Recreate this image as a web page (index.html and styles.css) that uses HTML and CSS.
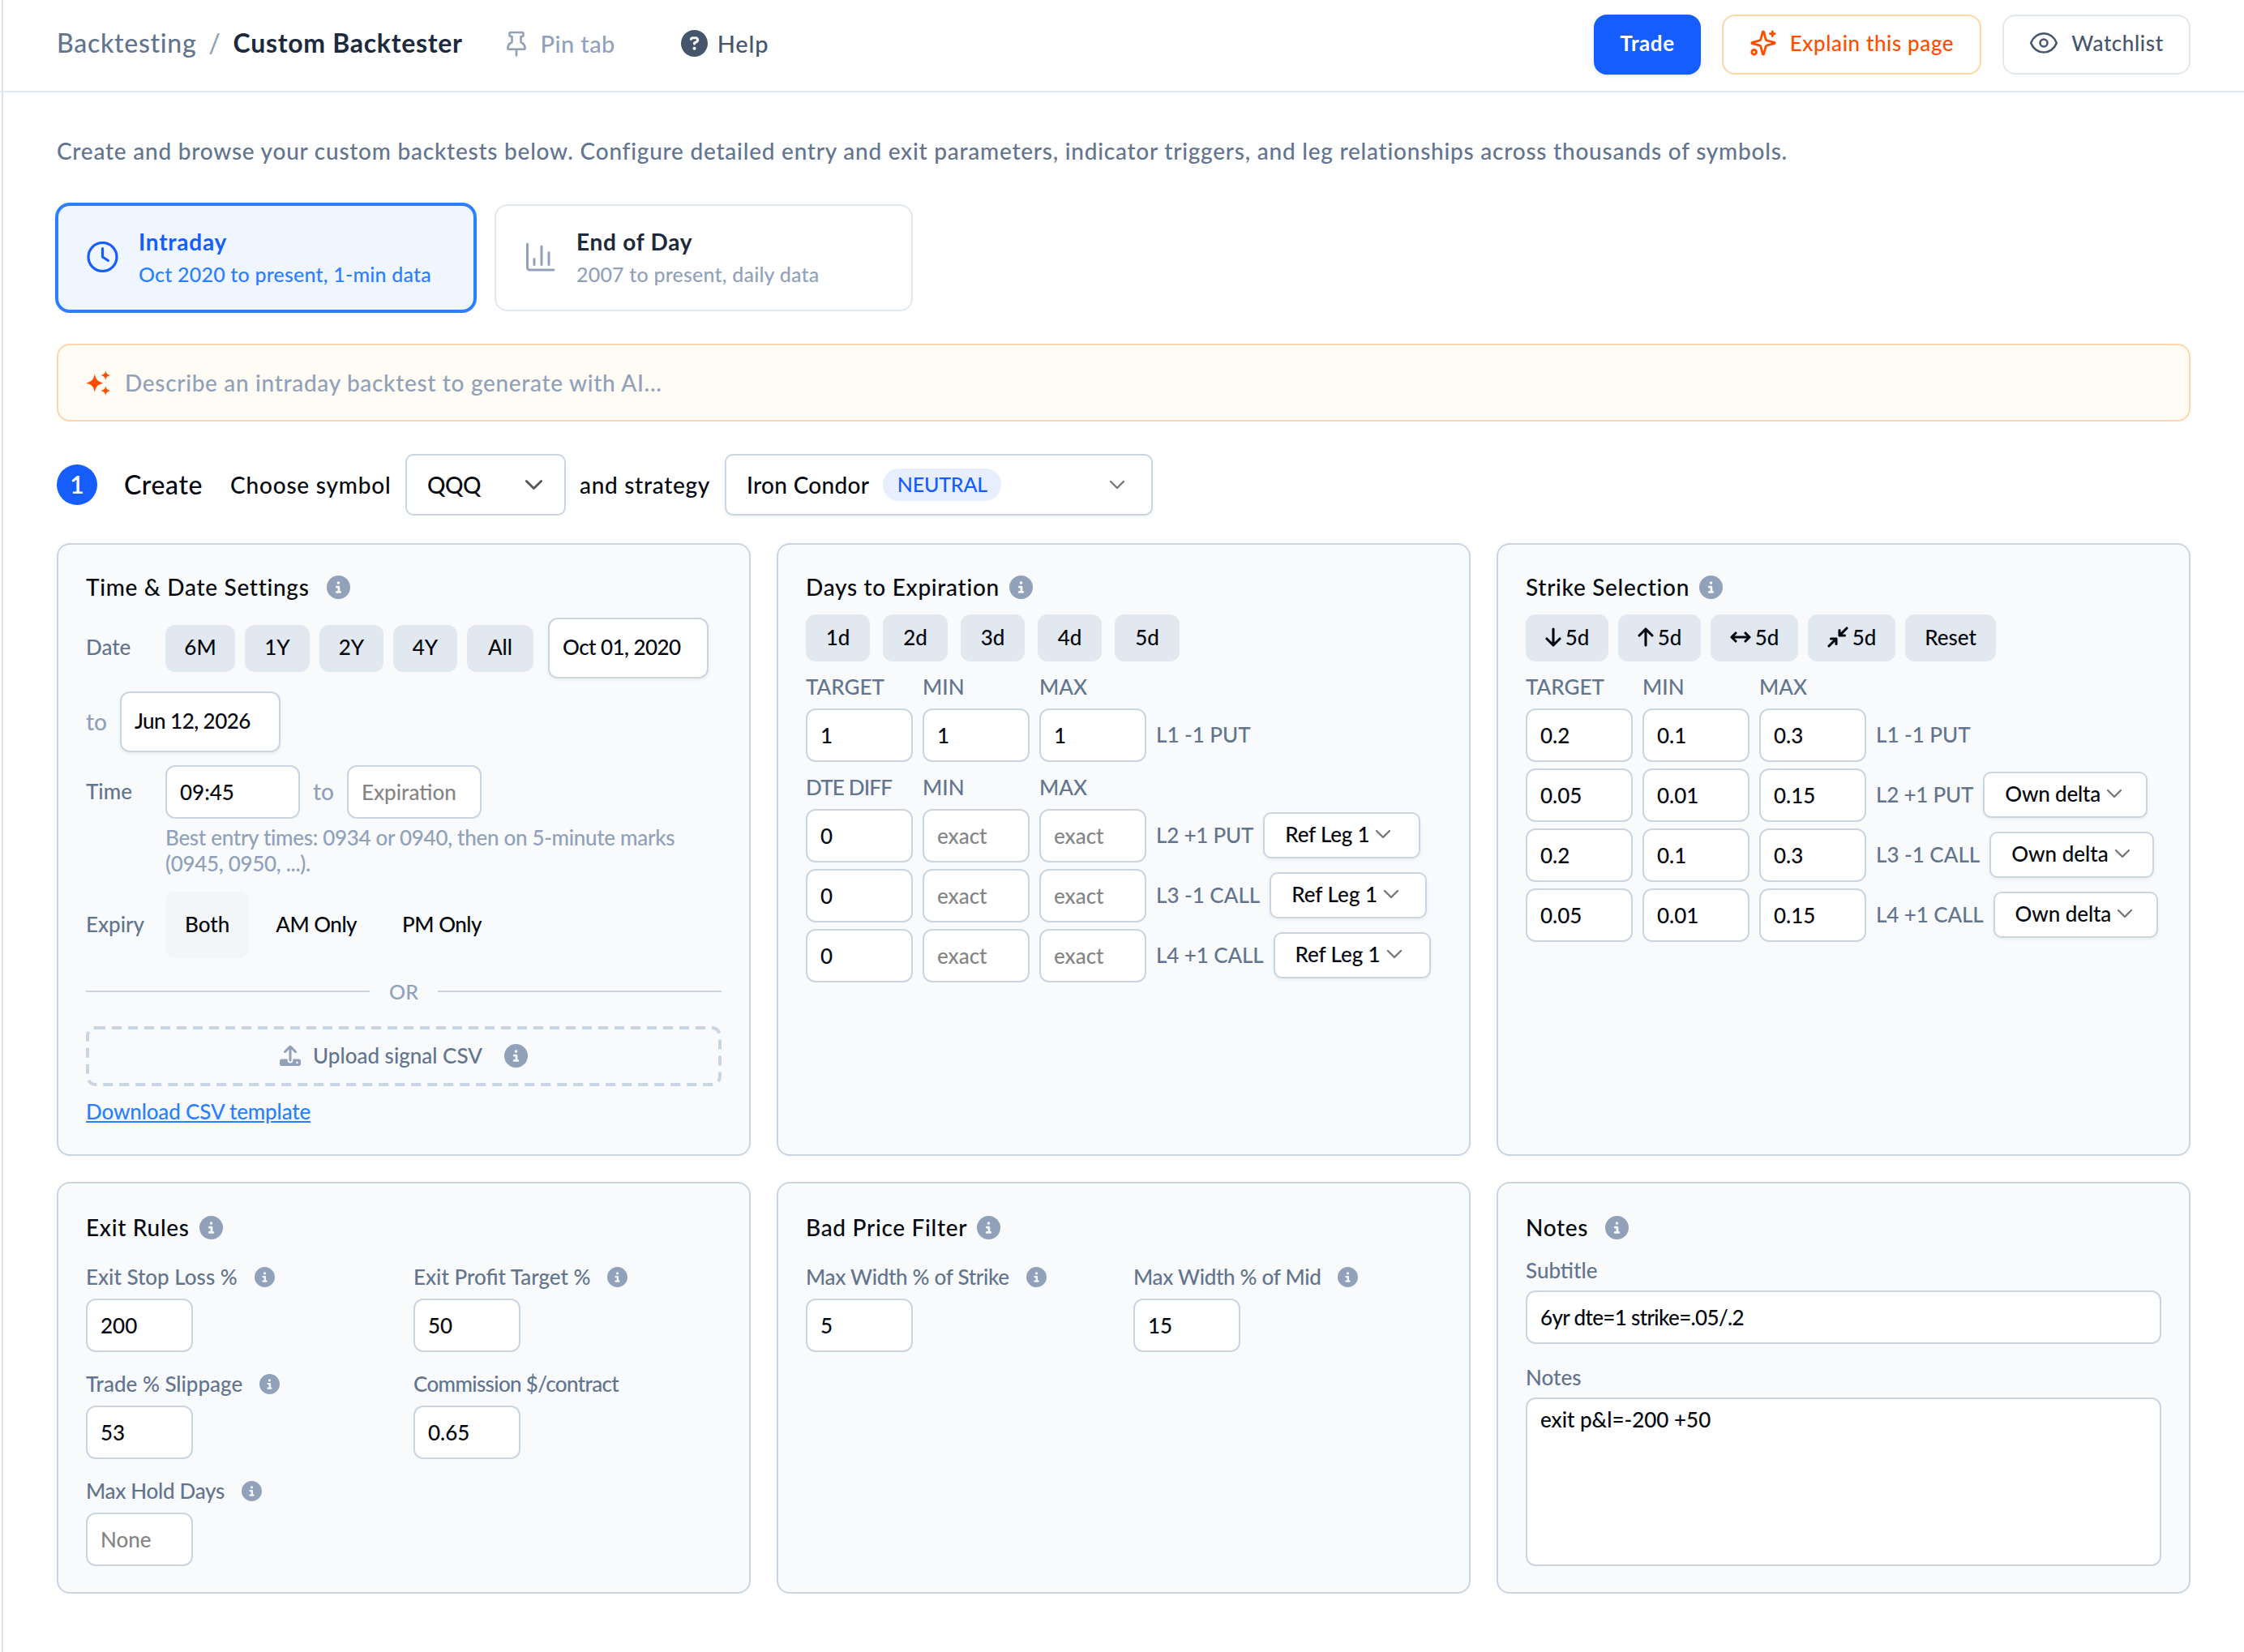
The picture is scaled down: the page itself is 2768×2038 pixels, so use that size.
FILE: index.html
```html
<!DOCTYPE html>
<html lang="en">
<head>
  <meta charset="UTF-8" />
  <meta name="viewport" content="width=device-width, initial-scale=1.0"/>
  <title>Custom Backtester</title>
  <link rel="stylesheet" href="styles.css">
</head>
<body>

<!-- shared icons -->
<svg class="sprite" xmlns="http://www.w3.org/2000/svg">
  <symbol id="i-info" viewBox="0 0 512 512">
    <path d="M256 512A256 256 0 1 0 256 0a256 256 0 1 0 0 512zM216 336h24V272H216c-13.300 0-24-10.700-24-24s10.700-24 24-24h48c13.300 0 24 10.700 24 24v88h8c13.300 0 24 10.700 24 24s-10.700 24-24 24H216c-13.300 0-24-10.700-24-24s10.700-24 24-24zm40-208a32 32 0 1 1 0 64 32 32 0 1 1 0-64z"/>
  </symbol>
  <symbol id="i-chevron" viewBox="0 0 20 12">
    <path d="M2 2l8 8 8-8" fill="none" stroke="currentColor" stroke-width="2.400" stroke-linecap="round" stroke-linejoin="round"/>
  </symbol>
</svg>

<div class="page">
  <header class="topbar">
    <nav class="crumbs">
      <a class="crumb">Backtesting</a>
      <span class="slash">/</span>
      <h1>Custom Backtester</h1>
    </nav>
    <a class="pin">
      <svg width="24" height="32" viewBox="0 0 24 32" fill="none" stroke="currentColor" stroke-width="2.600" stroke-linejoin="round" stroke-linecap="round"><path d="M5 2h14a1.500 1.500 0 0 1 1.500 1.500v2A1.500 1.500 0 0 1 19 7h-1.500v7c3 1.500 5 4 5 7.500 0 .800-.500 1.300-1.300 1.300H2.800c-.800 0-1.300-.500-1.300-1.300 0-3.500 2-6 5-7.500V7H5a1.500 1.500 0 0 1-1.500-1.500v-2A1.500 1.500 0 0 1 5 2zM12 23v7.500"/></svg>
      <span>Pin tab</span>
    </a>
    <a class="help">
      <svg width="33" height="33" viewBox="0 0 512 512" fill="currentColor"><path d="M256 512A256 256 0 1 0 256 0a256 256 0 1 0 0 512zM169.800 165.300c7.900-22.300 29.100-37.300 52.800-37.300h58.300c34.900 0 63.100 28.300 63.100 63.100c0 22.600-12.100 43.500-31.700 54.800L280 264.400c-.200 13-10.900 23.600-24 23.600c-13.300 0-24-10.700-24-24V250.500c0-8.600 4.600-16.500 12.100-20.800l44.300-25.400c4.700-2.700 7.600-7.700 7.600-13.100c0-8.400-6.800-15.100-15.100-15.100H222.600c-3.400 0-6.400 2.100-7.500 5.300l-.400 1.200c-4.400 12.500-18.200 19-30.600 14.600s-19-18.200-14.600-30.600l.4-1.200zM224 352a32 32 0 1 1 64 0 32 32 0 1 1-64 0z"/></svg>
      <span>Help</span>
    </a>
    <div class="actions">
      <button class="btn btn-trade">Trade</button>
      <button class="btn btn-explain">
        <svg width="34" height="34" viewBox="0 0 24 24" fill="none" stroke="currentColor" stroke-width="2" stroke-linecap="round" stroke-linejoin="round"><path d="M9.937 15.500A2 2 0 0 0 8.500 14.063l-6.135-1.582a.5.5 0 0 1 0-.962L8.500 9.936A2 2 0 0 0 9.937 8.500l1.582-6.135a.5.5 0 0 1 .963 0L14.063 8.500A2 2 0 0 0 15.500 9.937l6.135 1.581a.5.5 0 0 1 0 .964L15.500 14.063a2 2 0 0 0-1.437 1.437l-1.582 6.135a.5.5 0 0 1-.963 0z"/><path d="M20 2v4M22 4h-4"/><circle cx="4" cy="20" r="2"/></svg>
        <span>Explain this page</span>
      </button>
      <button class="btn btn-watch">
        <svg width="36" height="36" viewBox="0 0 24 24" fill="none" stroke="currentColor" stroke-width="1.700" stroke-linecap="round" stroke-linejoin="round"><path d="M1.600 12.300a1 1 0 0 1 0-.700C3.400 7 7.500 4.200 12 4.200s8.600 2.800 10.400 7.400a1 1 0 0 1 0 .700c-1.800 4.600-5.900 7.400-10.400 7.400S3.400 16.900 1.600 12.300z"/><circle cx="12" cy="12" r="3"/></svg>
        <span>Watchlist</span>
      </button>
    </div>
  </header>

  <main>
    <p class="intro">Create and browse your custom backtests below. Configure detailed entry and exit parameters, indicator triggers, and leg relationships across thousands of symbols.</p>

    <div class="modes">
      <div class="mode active">
        <svg width="40" height="40" viewBox="0 0 40 40" fill="none" stroke="currentColor" stroke-width="3.200" stroke-linecap="round" stroke-linejoin="round"><circle cx="20.500" cy="19" r="17.500"/><path d="M20.500 8.500V19l7 4.500"/></svg>
        <div>
          <strong>Intraday</strong>
          <small>Oct 2020 to present, 1-min data</small>
        </div>
      </div>
      <div class="mode">
        <svg width="40" height="40" viewBox="0 0 40 40" fill="none" stroke="currentColor" stroke-width="3" stroke-linecap="round" stroke-linejoin="round"><path d="M4.500 3v29a3 3 0 0 0 3 3H37M13 21.500v7M22 6v22.500M31 13.500v15"/></svg>
        <div>
          <strong>End of Day</strong>
          <small>2007 to present, daily data</small>
        </div>
      </div>
    </div>

    <div class="ai-box">
      <svg width="31" height="31" viewBox="0 0 30 30" fill="currentColor"><path d="M10.500 4c1.500 7 3 8.500 10 11-7 2.500-8.500 4-10 11-1.500-7-3-8.500-10-11 7-2.500 8.500-4 10-11zM23.500 0c.8 3.800 1.600 4.600 5.500 5.800-3.900 1.200-4.700 2-5.500 5.800-.800-3.800-1.600-4.600-5.500-5.800 3.900-1.200 4.700-2 5.500-5.800zM23.500 18.400c.8 3.800 1.600 4.600 5.500 5.800-3.900 1.200-4.700 2-5.500 5.800-.800-3.800-1.600-4.600-5.500-5.800 3.900-1.200 4.700-2 5.500-5.800z"/></svg>
      <span>Describe an intraday backtest to generate with AI...</span>
    </div>

    <div class="step">
      <span class="step-num">1</span>
      <h2>Create</h2>
      <span class="choose">Choose symbol</span>
      <div class="select symbol">QQQ <svg class="chev" width="23" height="14"><use href="#i-chevron"/></svg></div>
      <span class="and">and strategy</span>
      <div class="select strategy"><span>Iron Condor</span><span class="tag">NEUTRAL</span><svg class="chev" width="20" height="12"><use href="#i-chevron"/></svg></div>
    </div>

    <div class="cards">
      <section class="card">
        <h3 class="wide">Time &amp; Date Settings <svg class="info"><use href="#i-info"/></svg></h3>
        <div class="row dates">
          <span class="label">Date</span>
          <div class="chips">
            <button class="chip w86">6M</button>
            <button class="chip w80">1Y</button>
            <button class="chip">2Y</button>
            <button class="chip">4Y</button>
            <button class="chip w82">All</button>
          </div>
          <input class="date" type="text" value="Oct 01, 2020">
        </div>
        <div class="row dates second">
          <span class="to">to</span>
          <input class="date" type="text" value="Jun 12, 2026">
        </div>
        <div class="row times">
          <span class="label">Time</span>
          <input class="time" type="text" value="09:45">
          <span class="to">to</span>
          <input class="time" type="text" placeholder="Expiration">
        </div>
        <p class="hint">Best entry times: 0934 or 0940, then on 5-minute marks (0945, 0950, ...).</p>
        <div class="row expiry">
          <span class="label">Expiry</span>
          <button class="seg on">Both</button>
          <button class="seg">AM Only</button>
          <button class="seg">PM Only</button>
        </div>
        <div class="or"><span>OR</span></div>
        <div class="upload">
          <svg class="dashes"><rect x="2" y="2" rx="10"/></svg>
          <svg width="26" height="26" viewBox="0 0 26 26"><path d="M2.500 17.500h7.200v1.700a3.300 3.300 0 0 0 6.600 0v-1.700h7.200A2.500 2.500 0 0 1 26 20v3.500a2.500 2.500 0 0 1-2.500 2.500h-21A2.500 2.500 0 0 1 0 23.500V20a2.500 2.500 0 0 1 2.500-2.500zM21.500 20.600a1.300 1.300 0 1 0 0 2.600 1.300 1.300 0 0 0 0-2.600z" fill="currentColor" fill-rule="evenodd"/><path d="M13 19V2.500M6.500 8.500L13 2l6.500 6.500" fill="none" stroke="currentColor" stroke-width="3" stroke-linecap="round" stroke-linejoin="round"/></svg>
          <span>Upload signal CSV</span>
          <svg class="info"><use href="#i-info"/></svg>
        </div>
        <a class="download">Download CSV template</a>
      </section>

      <section class="card">
        <h3>Days to Expiration <svg class="info"><use href="#i-info"/></svg></h3>
        <div class="chips days">
          <button class="chip">1d</button>
          <button class="chip w80">2d</button>
          <button class="chip">3d</button>
          <button class="chip">4d</button>
          <button class="chip w80">5d</button>
        </div>
        <div class="legs head"><span>TARGET</span><span>MIN</span><span>MAX</span></div>
        <div class="legs">
          <input type="text" value="1"><input type="text" value="1"><input type="text" value="1">
          <div class="leg">L1 -1 PUT</div>
        </div>
        <div class="legs head"><span class="diff">DTE DIFF</span><span>MIN</span><span>MAX</span></div>
        <div class="legs">
          <input type="text" value="0"><input type="text" placeholder="exact"><input type="text" placeholder="exact">
          <div class="leg put">L2 +1 PUT <div class="select small ref">Ref Leg 1 <svg class="chev" width="20" height="12"><use href="#i-chevron"/></svg></div></div>
          <input type="text" value="0"><input type="text" placeholder="exact"><input type="text" placeholder="exact">
          <div class="leg">L3 -1 CALL <div class="select small ref">Ref Leg 1 <svg class="chev" width="20" height="12"><use href="#i-chevron"/></svg></div></div>
          <input type="text" value="0"><input type="text" placeholder="exact"><input type="text" placeholder="exact">
          <div class="leg plus">L4 +1 CALL <div class="select small ref">Ref Leg 1 <svg class="chev" width="20" height="12"><use href="#i-chevron"/></svg></div></div>
        </div>
      </section>

      <section class="card">
        <h3>Strike Selection <svg class="info"><use href="#i-info"/></svg></h3>
        <div class="chips strikes">
          <button class="chip w102"><svg width="20" height="24" viewBox="0 0 20 24"><path d="M10 2v20M2 14l8 8 8-8"/></svg>5d</button>
          <button class="chip w102"><svg width="20" height="24" viewBox="0 0 20 24"><path d="M10 22V2M2 10l8-8 8 8"/></svg>5d</button>
          <button class="chip w108"><svg width="26" height="24" viewBox="0 0 26 24"><path d="M2 12h22M7 7l-5 5 5 5M19 7l5 5-5 5"/></svg>5d</button>
          <button class="chip w108"><svg width="26" height="26" viewBox="0 0 26 26"><path d="M2 24l9-9M4.500 15H11v6.500M24 2l-9 9M15 4.500V11h6.500"/></svg>5d</button>
          <button class="chip w112">Reset</button>
        </div>
        <div class="legs head"><span>TARGET</span><span>MIN</span><span>MAX</span></div>
        <div class="legs">
          <input type="text" value="0.2"><input type="text" value="0.1"><input type="text" value="0.3">
          <div class="leg">L1 -1 PUT</div>
          <input type="text" value="0.05"><input type="text" value="0.01"><input type="text" value="0.15">
          <div class="leg put">L2 +1 PUT <div class="select small own">Own delta <svg class="chev" width="20" height="12"><use href="#i-chevron"/></svg></div></div>
          <input type="text" value="0.2"><input type="text" value="0.1"><input type="text" value="0.3">
          <div class="leg">L3 -1 CALL <div class="select small own">Own delta <svg class="chev" width="20" height="12"><use href="#i-chevron"/></svg></div></div>
          <input type="text" value="0.05"><input type="text" value="0.01"><input type="text" value="0.15">
          <div class="leg plus">L4 +1 CALL <div class="select small own">Own delta <svg class="chev" width="20" height="12"><use href="#i-chevron"/></svg></div></div>
        </div>
      </section>

      <section class="card lower">
        <h3>Exit Rules <svg class="info"><use href="#i-info"/></svg></h3>
        <div class="fields">
          <div class="field"><label>Exit Stop Loss % <svg class="info"><use href="#i-info"/></svg></label><input type="text" value="200"></div>
          <div class="field"><label>Exit Profit Target % <svg class="info"><use href="#i-info"/></svg></label><input type="text" value="50"></div>
          <div class="field"><label>Trade % Slippage <svg class="info"><use href="#i-info"/></svg></label><input type="text" value="53"></div>
          <div class="field"><label class="tight">Commission $/contract</label><input type="text" value="0.65"></div>
          <div class="field"><label class="snug">Max Hold Days <svg class="info"><use href="#i-info"/></svg></label><input type="text" placeholder="None"></div>
        </div>
      </section>

      <section class="card lower">
        <h3>Bad Price Filter <svg class="info"><use href="#i-info"/></svg></h3>
        <div class="fields">
          <div class="field"><label class="snug">Max Width % of Strike <svg class="info"><use href="#i-info"/></svg></label><input type="text" value="5"></div>
          <div class="field"><label class="snug">Max Width % of Mid <svg class="info"><use href="#i-info"/></svg></label><input type="text" value="15"></div>
        </div>
      </section>

      <section class="card lower">
        <h3 class="wide">Notes <svg class="info"><use href="#i-info"/></svg></h3>
        <div class="notes">
          <label>Subtitle</label>
          <input class="tight" type="text" value="6yr dte=1 strike=.05/.2">
          <label>Notes</label>
          <textarea>exit p&amp;l=-200 +50</textarea>
        </div>
      </section>
    </div>
  </main>
</div>

</body>
</html>
```

FILE: styles.css
```css
:root {
  --blue: #155dfc;
  --blue-light: #2b7fff;
  --orange: #ff4d00;
  --line: #cad5e2;
  --line-soft: #e2e8f0;
  --muted: #62748e;
  --faint: #90a1b9;
  --ink: #05080f;
}

* { box-sizing: border-box; }

body {
  margin: 0;
  background: #fff;
  color: var(--ink);
  font-family: Lato, 'Open Sans', sans-serif;
  font-size: 26px;
  font-weight: 500;
}

h1, h2, h3, p { margin: 0; font-weight: 500; }

svg { flex: none; }

.sprite { position: absolute; width: 0; height: 0; }

button, input, textarea {
  font: inherit;
  color: inherit;
  letter-spacing: inherit;
}

.page {
  min-height: 100vh;
  margin-left: 2px;
  border-left: 2px solid #dcdfea;
}

/* top bar */
.topbar {
  display: flex;
  align-items: center;
  height: 114px;
  margin-left: -4px;
  padding: 0 66px 3px 70px;
  border-bottom: 2px solid var(--line-soft);
}

.crumbs {
  display: flex;
  align-items: center;
  gap: 15px;
  padding-bottom: 4px;
  font-size: 32px;
  letter-spacing: 0.7px;
}

.crumb { color: var(--muted); }
.slash { color: var(--faint); }

.crumbs h1 {
  font-size: 32px;
  font-weight: 700;
  color: #1d293d;
}

.pin, .help {
  display: flex;
  align-items: center;
  padding-bottom: 2px;
  font-size: 29px;
  letter-spacing: 0.4px;
}

.pin {
  gap: 18px;
  margin-left: 54px;
  color: var(--faint);
}

.help {
  gap: 12px;
  margin-left: 81px;
  color: #45556c;
  letter-spacing: 0.8px;
}

.actions {
  display: flex;
  gap: 26px;
  margin-left: auto;
}

.btn {
  display: flex;
  align-items: center;
  justify-content: center;
  height: 74px;
  padding: 0 0 4px;
  border: 2px solid var(--line-soft);
  border-radius: 16px;
  background: #fff;
  letter-spacing: 0.6px;
}

.btn-trade {
  width: 132px;
  border-color: var(--blue);
  background: var(--blue);
  color: #fff;
  font-weight: 700;
  box-shadow: 0 2px 4px rgba(0,0,0,0.1);
}

.btn-explain {
  width: 320px;
  gap: 16px;
  border-color: #ffd6a7;
  color: var(--orange);
}

.btn-watch {
  width: 232px;
  gap: 16px;
  color: #45556c;
}

/* main column */
main { padding: 54px 66px 72px; }

.intro {
  font-size: 28px;
  line-height: 36px;
  letter-spacing: 0.76px;
  color: var(--muted);
}

.modes {
  display: flex;
  gap: 24px;
  margin-top: 48px;
}

.mode {
  display: flex;
  align-items: center;
  gap: 25px;
  width: 516px;
  height: 132px;
  padding: 0 34px;
  border: 2px solid var(--line-soft);
  border-radius: 16px;
  color: var(--faint);
}

.mode strong {
  display: block;
  font-size: 28px;
  line-height: 40px;
  font-weight: 700;
  letter-spacing: 0.75px;
  color: #1d293d;
}

.mode small {
  display: block;
  font-size: 25px;
  line-height: 40px;
  letter-spacing: 0.2px;
}

.mode.active {
  border-color: var(--blue-light);
  background: #eff6ff;
  box-shadow: 0 0 0 2px var(--blue-light);
  color: var(--blue);
}

.mode.active strong { color: var(--blue); }
.mode.active small { color: var(--blue-light); }

.ai-box {
  display: flex;
  align-items: center;
  gap: 17px;
  height: 96px;
  margin-top: 40px;
  padding: 0 34px;
  border: 2px solid #ffd6a7;
  border-radius: 16px;
  background: #fffbf5;
  color: var(--faint);
  font-size: 28px;
  letter-spacing: 0.68px;
}

.ai-box svg { color: var(--orange); }

.step {
  display: flex;
  align-items: center;
  height: 76px;
  margin: 40px 0 34px;
  font-size: 28px;
}

.step-num {
  width: 50px;
  height: 50px;
  border-radius: 50%;
  background: var(--blue);
  color: #fff;
  font-size: 30px;
  font-weight: 600;
  line-height: 49px;
  text-align: center;
}

.step h2 {
  width: 131px;
  margin-left: 33px;
  padding-bottom: 2px;
  font-size: 32px;
  letter-spacing: 0.6px;
}

.choose { width: 216px; letter-spacing: 0.8px; }
.and { width: 179px; margin-left: 17px; letter-spacing: 0.7px; }

.select {
  display: flex;
  align-items: center;
  height: 76px;
  border: 2px solid var(--line);
  border-radius: 10px;
  background: #fff;
  box-shadow: 0 2px 4px rgba(0,0,0,0.06);
}

.chev { color: #777; }

.symbol {
  width: 198px;
  padding: 0 26px 0 25px;
  justify-content: space-between;
  box-shadow: none;
  letter-spacing: -0.5px;
}

.symbol .chev { color: #555; }

.strategy {
  width: 528px;
  padding: 0 32px 0 25px;
  letter-spacing: 0.3px;
}

.strategy .chev { margin-left: auto; }

.tag {
  width: 146px;
  height: 40px;
  margin-left: 17px;
  border-radius: 20px;
  background: #e7eefe;
  color: var(--blue);
  font-size: 25px;
  line-height: 38px;
  letter-spacing: -0.2px;
  text-align: center;
}

/* cards */
.cards {
  display: grid;
  grid-template-columns: repeat(3, 856px);
  grid-template-rows: 756px 508px;
  gap: 32px;
}

.card {
  padding: 34px;
  border: 2px solid var(--line);
  border-radius: 16px;
  background: #f8fafc;
}

.card h3 {
  display: flex;
  align-items: center;
  gap: 12px;
  height: 36px;
  font-size: 28px;
  line-height: 34px;
  letter-spacing: 0.7px;
}

.card h3.wide { gap: 21px; }

.info {
  width: 29px;
  height: 29px;
  fill: var(--faint);
}

input, textarea {
  display: block;
  height: 66px;
  padding: 0 16px;
  border: 2px solid var(--line);
  border-radius: 12px;
  background: #fff;
  outline: none;
}

::placeholder { color: #858585; opacity: 1; }

.label, label, .head, .leg { color: var(--muted); }

.row {
  display: flex;
  align-items: center;
}

.row .label { width: 98px; padding-bottom: 3px; }

.to { padding-bottom: 2px; color: var(--faint); font-size: 28px; }

.dates { margin-top: 20px; }
.dates.second { margin-top: 16px; }

.date {
  width: 198px;
  height: 75px;
  padding-bottom: 3px;
  box-shadow: 0 2px 4px rgba(0,0,0,0.06);
  letter-spacing: -0.55px;
}

.dates .chips { margin-right: 18px; }
.dates.second .to { width: 42px; }

.chips {
  display: flex;
  gap: 12px;
}

.chip {
  display: flex;
  align-items: center;
  justify-content: center;
  gap: 5px;
  width: 79px;
  height: 58px;
  padding: 0 0 3px;
  border: none;
  border-radius: 12px;
  background: #e2e8f0;
}

.chip svg {
  fill: none;
  stroke: currentColor;
  stroke-width: 3.1;
  stroke-linecap: round;
  stroke-linejoin: round;
}

.w80 { width: 80px; }
.w82 { width: 82px; }
.w86 { width: 86px; }
.w102 { width: 102px; }
.w108 { width: 108px; }
.w112 { width: 112px; }

.days, .strikes { margin-top: 16px; }
.days { gap: 16px; }

.times { margin-top: 16px; }
.time { width: 166px; }
.times .to { width: 58px; text-align: center; }

.hint {
  margin: 7px 0 19px 98px;
  width: 660px;
  line-height: 32px;
  letter-spacing: -0.3px;
  color: var(--faint);
}

.seg {
  height: 82px;
  margin-right: 8px;
  padding: 0 24px 3px;
  border: none;
  border-radius: 12px;
  background: none;
}

.seg + .seg {
  padding-right: 23px;
  padding-left: 25px;
  letter-spacing: -0.5px;
}

.seg.on { background: #f4f5f7; }

.or {
  display: flex;
  align-items: center;
  gap: 24px;
  height: 34px;
  margin-top: 24px;
  color: var(--faint);
  font-size: 25px;
}

.or::before, .or::after {
  content: "";
  flex: 1;
  height: 2px;
  background: var(--line);
}

.upload {
  position: relative;
  display: flex;
  align-items: center;
  justify-content: center;
  height: 74px;
  margin-top: 26px;
  padding-bottom: 2px;
  color: var(--muted);
}

.upload svg { color: var(--faint); }
.upload span { margin: 0 27px 0 15px; }

/* dashed outline of the drop area */
.upload .dashes {
  position: absolute;
  top: 0;
  left: 0;
  width: 100%;
  height: 100%;
}

.dashes rect {
  width: calc(100% - 4px);
  height: calc(100% - 4px);
  fill: none;
  stroke: var(--line);
  stroke-width: 4;
  stroke-dasharray: 12 8;
}

.download {
  display: block;
  margin-top: 15px;
  line-height: 32px;
  letter-spacing: -0.15px;
  color: var(--blue-light);
  text-decoration: underline;
}

/* leg tables */
.legs {
  display: grid;
  grid-template-columns: 132px 132px 132px 1fr;
  gap: 8px 12px;
}

.legs input { width: 132px; }

.legs.head {
  margin: 15px 0 11px;
  line-height: 32px;
}

.diff { letter-spacing: -0.8px; }

.leg {
  display: flex;
  align-items: center;
  height: 64px;
}

.leg.put { letter-spacing: -0.2px; }
.leg.plus { letter-spacing: -0.1px; }

.small {
  height: 57px;
  margin-left: 12px;
  padding: 0 0 2px 25px;
  gap: 7px;
  color: var(--ink);
}

.ref { width: 194px; }
.own { width: 203px; }

/* fields */
.lower { padding-top: 36px; }

.fields {
  display: grid;
  grid-template-columns: 404px 1fr;
  row-gap: 23px;
  margin-top: 27px;
}

.field label {
  display: flex;
  align-items: center;
  height: 32px;
  margin-bottom: 11px;
}

.field .info {
  width: 25px;
  height: 25px;
  margin-left: 21px;
}

.field input { width: 132px; }

.tight { letter-spacing: -0.65px; }
.snug { letter-spacing: -0.3px; }

.notes { margin-top: 19px; }

.notes label {
  display: block;
  height: 32px;
  margin-bottom: 9px;
  line-height: 32px;
}

.notes input {
  width: 100%;
  margin-bottom: 25px;
}

.notes textarea {
  width: 100%;
  height: 208px;
  padding-top: 9px;
  line-height: 32px;
  resize: none;
}
```
